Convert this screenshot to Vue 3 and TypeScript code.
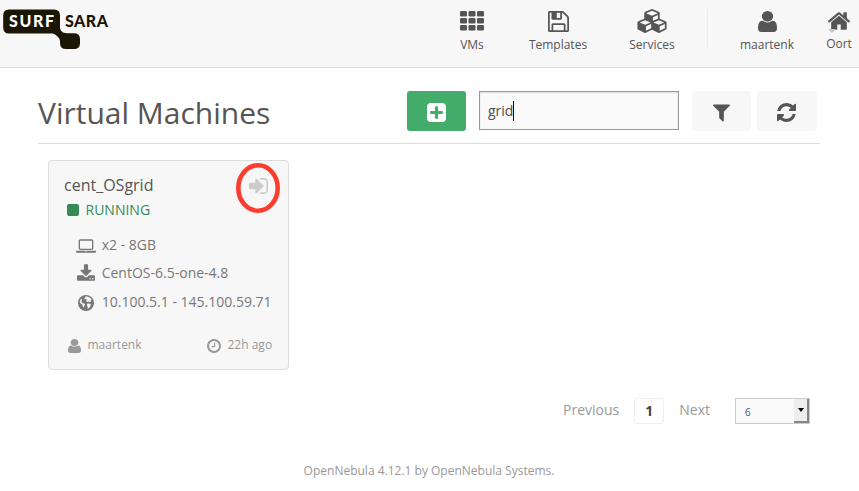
<script setup lang="ts">
import { ref } from 'vue'

interface Icon {
  box: string
  d: string
}

const icons: Record<string, Icon> = {
  floppy: {
    box: '128 128 1536 1536',
    d: 'M512 1536h768v-384h-768v384zm896 0h128v-896q0-14-10-38.5t-20-34.5l-281-281q-10-10-34-20t-39-10v416q0 40-28 68t-68 28h-576q-40 0-68-28t-28-68v-416h-128v1280h128v-416q0-40 28-68t68-28h832q40 0 68 28t28 68v416zm-384-928v-320q0-13-9.5-22.5t-22.5-9.5h-192q-13 0-22.5 9.5t-9.5 22.5v320q0 13 9.5 22.5t22.5 9.5h192q13 0 22.5-9.5t9.5-22.5zm640 32v928q0 40-28 68t-68 28h-1344q-40 0-68-28t-28-68v-1344q0-40 28-68t68-28h928q40 0 88 20t76 48l280 280q28 28 48 76t20 88z',
  },
  cubes: {
    box: '0 0 2176 1792',
    d: 'M640 1632l384-192v-314l-384 164v342zm-64-454l404-173-404-173-404 173zm1088 454l384-192v-314l-384 164v342zm-64-454l404-173-404-173-404 173zm-448-293l384-165v-266l-384 164v267zm-64-379l441-189-441-189-441 189zm1088 518v416q0 36-19 67t-52 47l-448 224q-25 14-57 14t-57-14l-448-224q-4-2-7-4-2 2-7 4l-448 224q-25 14-57 14t-57-14l-448-224q-33-16-52-47t-19-67v-416q0-38 21.5-70t56.5-48l434-186v-400q0-38 21.5-70t56.5-48l448-192q23-10 50-10t50 10l448 192q35 16 56.5 48t21.5 70v400l434 186q36 16 57 48t21 70z',
  },
  user: {
    box: '256 128 1280 1536',
    d: 'M1536 1399q0 109-62.5 187t-150.5 78h-854q-88 0-150.5-78t-62.5-187q0-85 8.5-160.5t31.5-152 58.5-131 94-89 134.5-34.5q131 128 313 128t313-128q76 0 134.5 34.5t94 89 58.5 131 31.5 152 8.5 160.5zm-256-887q0 159-112.5 271.5t-271.5 112.5-271.5-112.5-112.5-271.5 112.5-271.5 271.5-112.5 271.5 112.5 112.5 271.5z',
  },
  home: {
    box: '89 253 1614 1283',
    d: 'M1472 992v480q0 26-19 45t-45 19h-384v-384h-256v384h-384q-26 0-45-19t-19-45v-480q0-1 .5-3t.5-3l575-474 575 474q1 2 1 6zm223-69l-62 74q-8 9-21 11h-3q-13 0-21-7l-692-577-692 577q-12 8-24 7-13-2-21-11l-62-74q-8-10-7-23.5t11-21.5l719-599q32-26 76-26t76 26l244 204v-195q0-14 9-23t23-9h192q14 0 23 9t9 23v408l219 182q10 8 11 21.5t-7 23.5z',
  },
  plus: {
    box: '128 128 1536 1536',
    d: 'M1408 960v-128q0-26-19-45t-45-19h-320v-320q0-26-19-45t-45-19h-128q-26 0-45 19t-19 45v320h-320q-26 0-45 19t-19 45v128q0 26 19 45t45 19h320v320q0 26 19 45t45 19h128q26 0 45-19t19-45v-320h320q26 0 45-19t19-45zm256-544v960q0 119-84.5 203.5t-203.5 84.5h-960q-119 0-203.5-84.5t-84.5-203.5v-960q0-119 84.5-203.5t203.5-84.5h960q119 0 203.5 84.5t84.5 203.5z',
  },
  filter: {
    box: '192 256 1408 1408',
    d: 'M1595 295q17 41-14 70l-493 493v742q0 42-39 59-13 5-25 5-27 0-45-19l-256-256q-19-19-19-45v-486l-493-493q-31-29-14-70 17-39 59-39h1280q42 0 59 39z',
  },
  refresh: {
    box: '128 128 1536 1536',
    d: 'M1639 1056q0 5-1 7-64 268-268 434.5t-478 166.5q-146 0-282.5-55t-243.5-157l-129 129q-19 19-45 19t-45-19-19-45v-448q0-26 19-45t45-19h448q26 0 45 19t19 45-19 45l-137 137q71 66 161 102t187 36q134 0 250-65t186-179q11-17 53-117 8-23 30-23h192q13 0 22.5 9.5t9.5 22.5zm25-800v448q0 26-19 45t-45 19h-448q-26 0-45-19t-19-45 19-45l138-138q-148-137-349-137-134 0-250 65t-186 179q-11 17-53 117-8 23-30 23h-199q-13 0-22.5-9.5t-9.5-22.5v-7q65-268 270-434.5t480-166.5q146 0 284 55.5t245 156.5l130-129q19-19 45-19t45 19 19 45z',
  },
  signIn: {
    box: '128 256 1536 1280',
    d: 'M1312 896q0 26-19 45l-544 544q-19 19-45 19t-45-19-19-45v-288h-448q-26 0-45-19t-19-45v-384q0-26 19-45t45-19h448v-288q0-26 19-45t45-19 45 19l544 544q19 19 19 45zm352-352v704q0 119-84.5 203.5t-203.5 84.5h-320q-13 0-22.5-9.5t-9.5-22.5q0-4-1-20t-.5-26.5 3-23.5 10-19.5 20.5-6.5h320q66 0 113-47t47-113v-704q0-66-47-113t-113-47h-312l-11.5-1-11.5-3-8-5.5-7-9-2-13.5q0-4-1-20t-.5-26.5 3-23.5 10-19.5 20.5-6.5h320q119 0 203.5 84.5t84.5 203.5z',
  },
  laptop: {
    box: '0 256 1920 1280',
    d: 'M416 1280q-66 0-113-47t-47-113v-704q0-66 47-113t113-47h1088q66 0 113 47t47 113v704q0 66-47 113t-113 47h-1088zm-32-864v704q0 13 9.5 22.5t22.5 9.5h1088q13 0 22.5-9.5t9.5-22.5v-704q0-13-9.5-22.5t-22.5-9.5h-1088q-13 0-22.5 9.5t-9.5 22.5zm1376 928h160v96q0 40-47 68t-113 28h-1600q-66 0-113-28t-47-68v-96h1760zm-720 96q16 0 16-16t-16-16h-160q-16 0-16 16t16 16h160z',
  },
  download: {
    box: '64 0 1664 1536',
    d: 'M1344 1344q0-26-19-45t-45-19-45 19-19 45 19 45 45 19 45-19 19-45zm256 0q0-26-19-45t-45-19-45 19-19 45 19 45 45 19 45-19 19-45zm128-224v320q0 40-28 68t-68 28h-1472q-40 0-68-28t-28-68v-320q0-40 28-68t68-28h465l135 136q58 56 136 56t136-56l136-136h464q40 0 68 28t28 68zm-325-569q17 41-14 70l-448 448q-18 19-45 19t-45-19l-448-448q-31-29-14-70 17-39 59-39h256v-448q0-26 19-45t45-19h256q26 0 45 19t19 45v448h256q42 0 59 39z',
  },
  clock: {
    box: '128 128 1536 1536',
    d: 'M1024 544v448q0 14-9 23t-23 9h-320q-14 0-23-9t-9-23v-64q0-14 9-23t23-9h224v-352q0-14 9-23t23-9h64q14 0 23 9t9 23zm416 352q0-148-73-273t-198-198-273-73-273 73-198 198-73 273 73 273 198 198 273 73 273-73 198-198 73-273zm224 0q0 209-103 385.5t-279.5 279.5-385.5 103-385.5-103-279.5-279.5-103-385.5 103-385.5 279.5-279.5 385.5-103 385.5 103 279.5 279.5 103 385.5z',
  },
}

const cells: { x: number; y: number }[] = [0, 1, 2].flatMap((r) =>
  [0, 1, 2].map((c) => ({ x: c * 8.5, y: r * 7 })),
)

const search = ref<string>('grid')
const vm = {
  name: 'cent_OSgrid',
  state: 'RUNNING',
  size: 'x2 - 8GB',
  image: 'CentOS-6.5-one-4.8',
  ips: '10.100.5.1 - 145.100.59.71',
  owner: 'maartenk',
  age: '22h ago',
}
</script>

<template>
  <div class="page">
    <header class="topbar">
      <svg class="logo" width="110" height="44" viewBox="0 0 110 44">
        <path
          d="M9 4.5H54Q60 4.5 60 10.5V22C60 26 62.5 28.2 67 28.2H74Q80 28.2 80 34V38Q80 44 74 44H66Q60 44 60 38V36Q59.5 31.5 53 28.5H9Q3.2 28.5 3.2 22.5V10.5Q3.2 4.5 9 4.5Z"
          fill="#1b1503"
        />
        <text class="brand" x="9" y="22" textLength="45" lengthAdjust="spacing" fill="#fff">SURF</text>
        <text class="brand" x="65" y="22" textLength="43" lengthAdjust="spacing" fill="#1b1503">SARA</text>
      </svg>
      <nav class="nav">
        <a class="item vms">
          <svg class="glyph" width="24" height="20" viewBox="0 0 24 20">
            <rect v-for="(p, i) in cells" :key="i" :x="p.x" :y="p.y" width="7" height="5.4" rx="1.2" />
          </svg>
          <span>VMs</span>
        </a>
        <a class="item templates">
          <svg class="glyph" width="21" height="21" :viewBox="icons.floppy.box"><path :d="icons.floppy.d" /></svg>
          <span>Templates</span>
        </a>
        <a class="item services">
          <svg class="glyph cubes" width="30" height="24" :viewBox="icons.cubes.box"><path :d="icons.cubes.d" /></svg>
          <span>Services</span>
        </a>
        <i class="divider"></i>
        <a class="item account">
          <svg class="glyph" width="19" height="21" :viewBox="icons.user.box" preserveAspectRatio="none"><path :d="icons.user.d" /></svg>
          <span>maartenk</span>
        </a>
        <a class="item zone">
          <svg class="glyph" width="22" height="18" :viewBox="icons.home.box"><path :d="icons.home.d" /></svg>
          <i class="caret"></i>
          <span>Oort</span>
        </a>
      </nav>
    </header>

    <main class="content">
      <div class="heading">
        <h1>Virtual Machines</h1>
        <button class="btn create">
          <svg width="19" height="19" :viewBox="icons.plus.box"><path :d="icons.plus.d" /></svg>
        </button>
        <div class="search"><span>{{ search }}</span><i class="cursor"></i></div>
        <button class="btn filter">
          <svg width="17" height="18" :viewBox="icons.filter.box"><path :d="icons.filter.d" /></svg>
        </button>
        <button class="btn reload">
          <svg width="19" height="19" :viewBox="icons.refresh.box"><path :d="icons.refresh.d" /></svg>
        </button>
      </div>

      <section class="card">
        <div class="title">
          <span>{{ vm.name }}</span>
          <svg class="enter" width="19" height="16" :viewBox="icons.signIn.box"><path :d="icons.signIn.d" /></svg>
        </div>
        <svg class="ring" width="46" height="52" viewBox="0 0 46 52">
          <ellipse cx="23" cy="26" rx="19.7" ry="22.7" fill="none" stroke="#fd3b2f" stroke-width="4.6" />
        </svg>
        <div class="state"><i class="square"></i>{{ vm.state }}</div>
        <ul class="facts">
          <li>
            <svg class="low" width="20" height="14" :viewBox="icons.laptop.box"><path :d="icons.laptop.d" /></svg>
            <span>{{ vm.size }}</span>
          </li>
          <li>
            <svg width="18" height="17" :viewBox="icons.download.box"><path :d="icons.download.d" /></svg>
            <span>{{ vm.image }}</span>
          </li>
          <li>
            <svg class="low" width="16" height="16" viewBox="0 0 16 16">
              <circle cx="8" cy="8" r="8" />
              <path class="land" d="M7.6 1.6L9.6 1.5L12.2 2.7L13.6 4.4L12.5 5.4L13.2 6.6L11.6 7.2L10.6 6.3L9.4 7.1L8.1 6.1L9.2 4.7L7.8 3.9L6.4 4.3L6.7 2.8Z" />
              <path class="land" d="M2.6 4.6L3.7 3.6L3.9 5.3L3.2 6.7L4.5 7.9L6.2 8.6L7 9.8L6.1 11.3L5.8 12.6L4.8 11.6L4.3 9.7L2.5 8.3L1.7 6.6Z" />
              <path class="land" d="M9.2 8.7L11.3 8.5L13 9.5L12.3 11.3L10.8 13.2L9.5 13.7L9.7 11.5L8.8 10.2Z" />
            </svg>
            <span>{{ vm.ips }}</span>
          </li>
        </ul>
        <footer class="meta">
          <svg width="13" height="14" :viewBox="icons.user.box" preserveAspectRatio="none"><path :d="icons.user.d" /></svg>
          <span class="owner">{{ vm.owner }}</span>
          <svg width="14" height="14" :viewBox="icons.clock.box"><path :d="icons.clock.d" /></svg>
          <span class="age">{{ vm.age }}</span>
        </footer>
      </section>

      <div class="pager">
        <span class="prev">Previous</span>
        <span class="current">1</span>
        <span class="next">Next</span>
        <div class="length">
          <span>6</span>
          <i class="drop"></i>
        </div>
      </div>
    </main>
    <p class="credit">OpenNebula 4.12.1 by OpenNebula Systems.</p>
  </div>
</template>

<style>
body {
  margin: 0;
  background: #fff;
}
</style>

<style scoped>
.page {
  width: 859px;
  height: 491px;
  overflow: hidden;
  font-family: 'Open Sans', 'Noto Sans', sans-serif;
  color: #555;
}
svg {
  display: block;
  flex: none;
  fill: currentColor;
}
.topbar {
  box-sizing: border-box;
  height: 68px;
  display: flex;
  align-items: flex-start;
  background: #f7f7f7;
  border-bottom: 1px solid #dadada;
}
.logo {
  margin-top: 5px;
}
.brand {
  font: 900 16px Lato, sans-serif;
}
.nav {
  display: flex;
  margin-left: 330px;
}
.item {
  height: 67px;
  display: flex;
  flex-direction: column;
  align-items: center;
  font-size: 12px;
  line-height: 16px;
}
.item .glyph {
  margin: 11px 0 5px;
}
.vms .glyph {
  margin-bottom: 6px;
}
.services .cubes {
  margin: 9px 0 4px;
}
.vms { width: 64px; }
.templates { width: 108px; }
.services { width: 80px; }
.account { width: 118px; }
.zone {
  width: 26px;
  position: relative;
}
.item.zone .glyph {
  margin: 12px 0 6px;
}
.caret {
  position: absolute;
  left: 2px;
  top: 29px;
  border: 4px solid transparent;
  border-top-color: #c6c6c6;
  border-bottom: 0;
}
.divider {
  width: 1px;
  height: 40px;
  margin: 9px 0 0 15px;
  background: #ececec;
}
.content {
  width: 782px;
  margin-left: 38px;
}
.heading {
  box-sizing: border-box;
  height: 76px;
  padding-top: 23px;
  display: flex;
  align-items: flex-start;
  border-bottom: 1px solid #ddd;
}
h1 {
  width: 369px;
  margin: 0;
  font-size: 30px;
  font-weight: 400;
  line-height: 44px;
}
.btn {
  height: 40px;
  padding: 0;
  display: flex;
  align-items: center;
  justify-content: center;
  border: 0;
  border-radius: 3px;
  background: #f7f7f7;
  color: #555;
}
.btn svg {
  margin-top: 3px;
}
.create {
  width: 59px;
  background: #43ac6a;
  color: #fff;
}
.search {
  box-sizing: border-box;
  width: 200px;
  height: 39px;
  margin: 0 13px;
  padding-left: 8px;
  display: flex;
  align-items: center;
  border: 1px solid #999;
  background: #fafafa;
  box-shadow: inset 0 1px 2px rgba(0, 0, 0, 0.12);
  font-size: 14px;
  color: #4d4d4d;
}
.cursor {
  width: 1px;
  height: 20px;
  background: #111;
}
.filter {
  width: 59px;
}
.reload {
  width: 60px;
  margin-left: 6px;
}
.reload svg {
  margin-right: 1px;
}
.card {
  box-sizing: border-box;
  position: relative;
  width: 241px;
  height: 210px;
  margin: 16px 0 0 10px;
  padding: 14px 15px 0;
  border: 1px solid #ddd;
  border-radius: 4px;
  background: #f7f7f7;
}
.title {
  height: 20px;
  display: flex;
  justify-content: space-between;
  font-size: 16px;
  line-height: 20px;
}
.enter {
  margin: 3px 5px 0 0;
  color: #ccc;
}
.ring {
  position: absolute;
  left: 185.5px;
  top: 1.3px;
}
.state {
  height: 20px;
  margin: 5px 0 0 3px;
  display: flex;
  align-items: center;
  gap: 6.5px;
  font-size: 14px;
  line-height: 20px;
  color: #368a55;
}
.square {
  width: 12px;
  height: 12px;
  border-radius: 2px;
  background: #368a55;
}
.facts {
  margin: 10px 0 0 11px;
  padding: 0;
  list-style: none;
  font-size: 14px;
  color: #777;
}
.facts li {
  height: 28.5px;
  display: grid;
  grid-template-columns: 22px auto;
  column-gap: 4.7px;
  align-items: center;
  justify-items: start;
  white-space: nowrap;
}
.facts svg {
  justify-self: center;
}
.facts .low {
  margin-top: 3px;
}
.land {
  fill: #f7f7f7;
}
.meta {
  margin: 19px 0 0 4px;
  display: flex;
  align-items: center;
  font-size: 12px;
  line-height: 20px;
  color: #999;
}
.meta svg {
  margin-top: 3px;
}
.owner {
  width: 119px;
  padding-left: 6.5px;
}
.age {
  padding-left: 7px;
}
.pager {
  height: 26px;
  margin-top: 28px;
  display: flex;
  justify-content: flex-end;
  align-items: center;
  padding-right: 10px;
  font-size: 14px;
  line-height: 24px;
  color: #999;
}
.prev,
.next {
  margin-bottom: 2px;
}
.current {
  box-sizing: border-box;
  width: 30px;
  height: 26px;
  margin: 0 15px;
  border: 1px solid #eee;
  border-radius: 3px;
  text-align: center;
  font-weight: 700;
  color: #444;
}
.length {
  box-sizing: border-box;
  width: 75px;
  height: 26px;
  margin-left: 25px;
  padding-left: 9px;
  display: flex;
  justify-content: space-between;
  border: 1px solid #ccc;
  background: #fafafa;
  font-size: 10px;
  line-height: 27px;
  color: #555;
}
.drop {
  box-sizing: border-box;
  width: 15px;
  height: 24px;
  display: flex;
  align-items: center;
  justify-content: center;
  border-right: 2px solid #858585;
  border-bottom: 2px solid #858585;
  background: #eee;
}
.drop::before {
  content: '';
  border: 3.5px solid transparent;
  border-top: 4px solid #000;
  border-bottom: 0;
}
.credit {
  margin: 38px 1px 0 0;
  text-align: center;
  font-size: 12px;
  line-height: 18px;
  color: #999;
}
</style>
